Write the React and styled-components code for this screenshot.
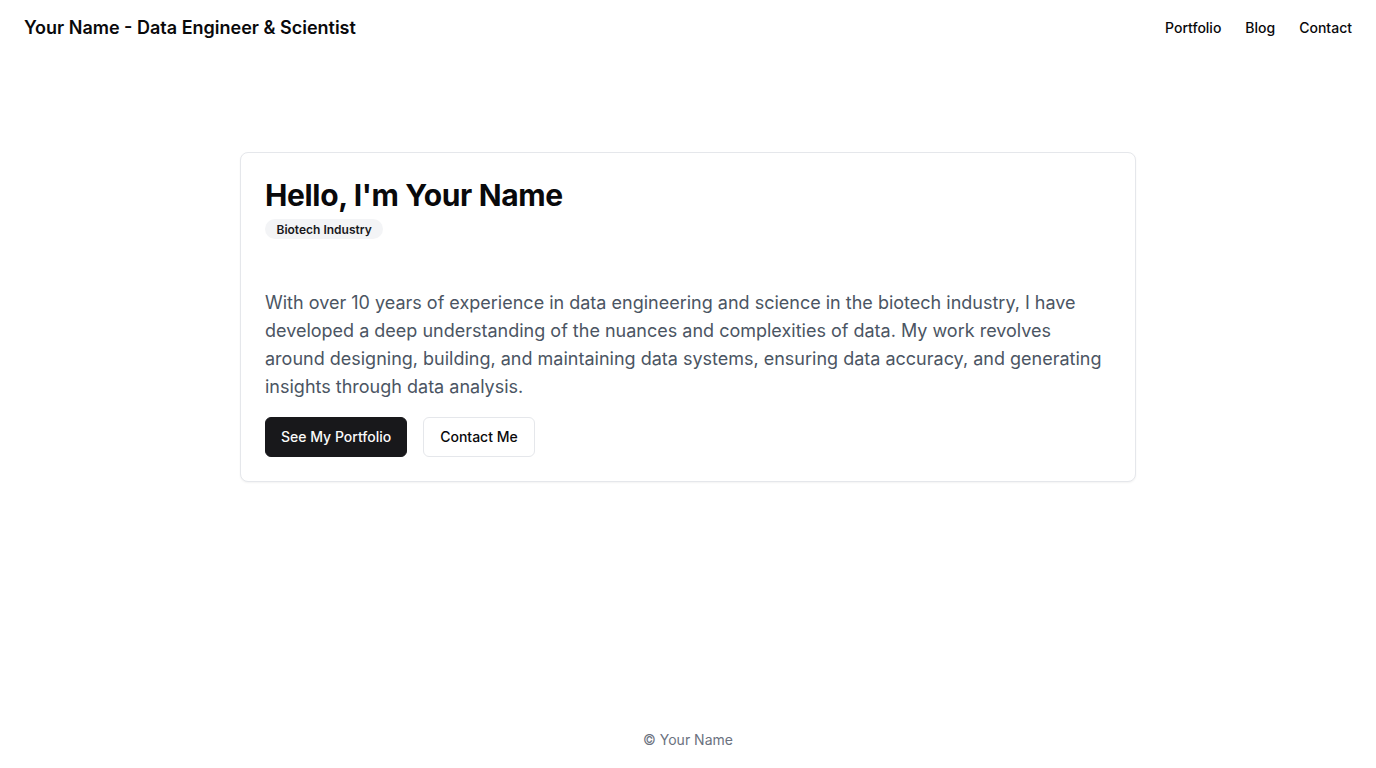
import React from "react";
import styled, { createGlobalStyle } from "styled-components";

const Global = createGlobalStyle`
  * { box-sizing: border-box; }
  html, body { margin: 0; padding: 0; background: #ffffff; }
  body { font-family: Inter, "Noto Sans", "Liberation Sans", sans-serif; color: #09090b; -webkit-font-smoothing: antialiased; }
`;

const Page = styled.div`
  min-height: 768px;
  display: flex;
  flex-direction: column;
`;

const Header = styled.header`
  height: 56px;
  padding: 0 24px;
  display: flex;
  align-items: center;
  justify-content: space-between;
`;

const Brand = styled.a`
  font-size: 18px;
  font-weight: 600;
  line-height: 28px;
  color: #09090b;
  text-decoration: none;
`;

const Nav = styled.nav`
  display: flex;
  gap: 24px;
`;

const NavLink = styled.a`
  font-size: 14px;
  font-weight: 500;
  line-height: 20px;
  color: #09090b;
  text-decoration: none;
`;

const Main = styled.main`
  flex: 1;
  padding: 96px 24px 0;
  display: flex;
  justify-content: center;
  align-items: flex-start;
`;

const Card = styled.section`
  width: 896px;
  border: 1px solid #e5e7eb;
  border-radius: 8px;
  background: #fff;
  box-shadow: 0 1px 2px rgba(0, 0, 0, 0.05);
`;

const CardHeader = styled.div`
  padding: 24px;
  display: flex;
  flex-direction: column;
  align-items: flex-start;
  gap: 6px;
`;

const Title = styled.h1`
  margin: 0;
  font-size: 30px;
  line-height: 36px;
  font-weight: 700;
  letter-spacing: -0.35px;
  color: #09090b;
`;

const Badge = styled.span`
  display: inline-flex;
  align-items: center;
  height: 20px;
  padding: 0 11.5px;
  border-radius: 9999px;
  background: #f3f4f6;
  font-size: 12px;
  font-weight: 600;
  color: #18181b;
`;

const CardContent = styled.div`
  padding: 26px 24px 24px;
`;

const Text = styled.p`
  margin: 0 0 16px;
  font-size: 18px;
  line-height: 28px;
  color: #4b5563;
`;

const Actions = styled.div`
  display: flex;
  gap: 16px;
`;

const Button = styled.a`
  display: inline-flex;
  align-items: center;
  justify-content: center;
  height: 40px;
  padding: 0 ${(p) => (p.$primary ? "15px" : "16px")} 1px;
  border-radius: 6px;
  font-size: 14px;
  font-weight: 500;
  text-decoration: none;
  background: ${(p) => (p.$primary ? "#18181b" : "#ffffff")};
  color: ${(p) => (p.$primary ? "#fafafa" : "#09090b")};
  border: 1px solid ${(p) => (p.$primary ? "#18181b" : "#e5e7eb")};
`;

const Footer = styled.footer`
  height: 56px;
  display: flex;
  align-items: center;
  justify-content: center;
  font-size: 14px;
  line-height: 20px;
  color: #6b7280;
`;

export default function App() {
  return (
    <>
      <Global />
      <Page>
        <Header>
          <Brand href="#">Your Name - Data Engineer &amp; Scientist</Brand>
          <Nav>
            <NavLink href="#">Portfolio</NavLink>
            <NavLink href="#">Blog</NavLink>
            <NavLink href="#">Contact</NavLink>
          </Nav>
        </Header>
        <Main>
          <Card>
            <CardHeader>
              <Title>Hello, I'm Your Name</Title>
              <Badge>Biotech Industry</Badge>
            </CardHeader>
            <CardContent>
              <Text>
                With over 10 years of experience in data engineering and science in the biotech industry, I have
                developed a deep understanding of the nuances and complexities of data. My work revolves around
                designing, building, and maintaining data systems, ensuring data accuracy, and generating insights
                through data analysis.
              </Text>
              <Actions>
                <Button $primary href="#">See My Portfolio</Button>
                <Button href="#">Contact Me</Button>
              </Actions>
            </CardContent>
          </Card>
        </Main>
        <Footer>© Your Name</Footer>
      </Page>
    </>
  );
}
